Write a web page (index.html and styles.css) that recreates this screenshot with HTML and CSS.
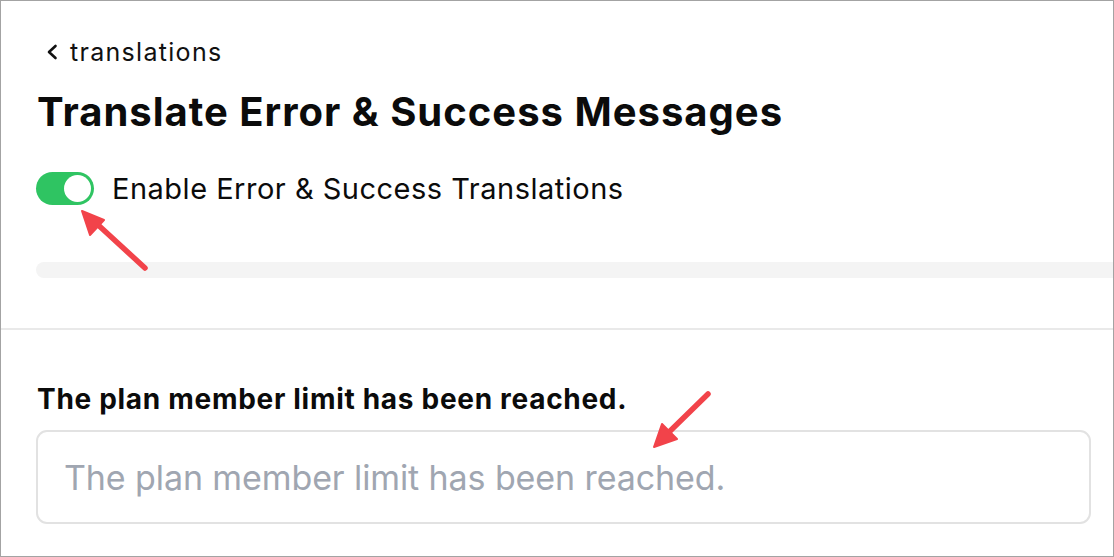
FILE: index.html
```html
<!DOCTYPE html>
<html lang="en">
<head>
<meta charset="utf-8">
<title>Translate Error &amp; Success Messages</title>
<link rel="stylesheet" href="styles.css">
</head>
<body>
<div class="frame">
  <section class="top">
    <a class="back" href="#">
      <svg class="chev" width="12" height="18" viewBox="0 0 12 18"><path d="M9.5 3 L3 9 L9.5 15" fill="none" stroke="#111" stroke-width="2.6" stroke-linecap="round" stroke-linejoin="round"/></svg>
      <span>translations</span>
    </a>
    <h1 class="title">Translate Error &amp; Success Messages</h1>
    <div class="toggle-row">
      <span class="toggle"><span class="knob"></span></span>
      <span class="toggle-label">Enable Error &amp; Success Translations</span>
    </div>
    <div class="bar"></div>
  </section>
  <div class="divider"></div>
  <section class="bottom">
    <label class="field-label" for="msg">The plan member limit has been reached.</label>
    <input class="field" id="msg" type="text" placeholder="The plan member limit has been reached.">
  </section>
  <svg class="arrows" width="1114" height="557" viewBox="0 0 1114 557">
    <g fill="#f2434a" stroke="#f2434a" stroke-linecap="round" stroke-linejoin="round">
      <line x1="145" y1="268" x2="96" y2="223" stroke-width="5.5"/>
      <polygon points="82,211 104,220 90,235" stroke-width="2"/>
      <line x1="708" y1="394" x2="666" y2="435" stroke-width="5.5"/>
      <polygon points="654,447 662,424 677,439" stroke-width="2"/>
    </g>
  </svg>
</div>
</body>
</html>
```

FILE: styles.css
```css
* { box-sizing: border-box; }
html, body { margin: 0; padding: 0; background: #fff; }
body { font-family: "Inter", "Liberation Sans", sans-serif; color: #0b0b0b; }

.frame {
  position: relative;
  width: 1114px;
  height: 557px;
  border: 1px solid #a3a3a3;
  overflow: hidden;
  background: #fff;
}

.top { padding: 35px 0 0 35px; }

.back {
  display: flex;
  align-items: center;
  height: 32px;
  color: #111;
  text-decoration: none;
  font-size: 25px;
  letter-spacing: 1.3px;
}
.chev { margin-left: 10px; margin-right: 12px; }

.title {
  margin: 19px 0 0 1px;
  font-size: 40px;
  line-height: 50px;
  font-weight: 700;
  letter-spacing: 1px;
}

.toggle-row {
  display: flex;
  align-items: center;
  gap: 18px;
  margin-top: 35px;
  height: 33px;
}
.toggle {
  display: flex;
  align-items: center;
  justify-content: flex-end;
  width: 58px;
  height: 33px;
  padding: 3px;
  border-radius: 17px;
  background: #2fc462;
}
.knob {
  width: 27px;
  height: 27px;
  border-radius: 50%;
  background: #fff;
}
.toggle-label { font-size: 29px; letter-spacing: 0.5px; }

.bar {
  margin-top: 57px;
  height: 16px;
  background: #f4f4f4;
  border-radius: 8px 0 0 8px;
}

.divider {
  margin-top: 50px;
  height: 2px;
  background: #e9e9e9;
}

.bottom { padding: 53px 22px 0 35px; }

.field-label {
  display: block;
  margin-left: 1px;
  font-size: 28px;
  line-height: 32px;
  font-weight: 700;
  letter-spacing: 0.7px;
}
.field {
  display: block;
  width: 100%;
  height: 94px;
  margin-top: 15px;
  padding: 0 26px;
  border: 2px solid #e2e2e2;
  border-radius: 11px;
  background: #fff;
  font-family: inherit;
  font-size: 34px;
  letter-spacing: -0.1px;
  outline: none;
}
.field::placeholder { color: #a0a6b1; }

.arrows { position: absolute; left: -1px; top: -1px; pointer-events: none; }
```
